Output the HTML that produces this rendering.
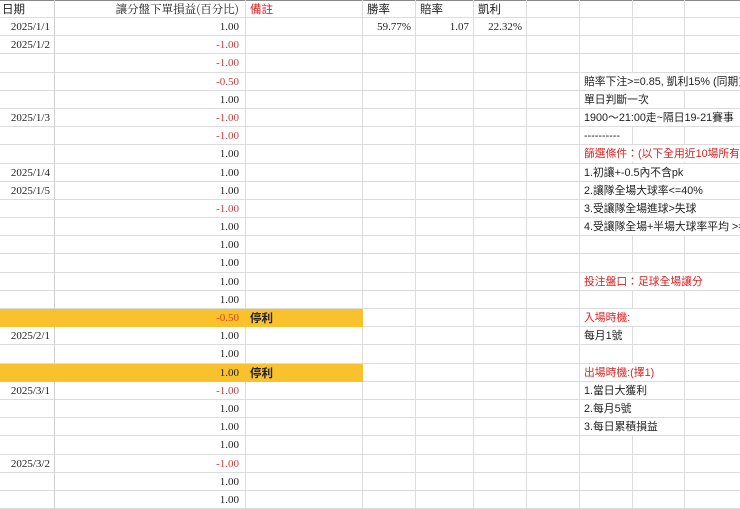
<!DOCTYPE html>
<html><head><meta charset="utf-8"><style>
*{margin:0;padding:0;box-sizing:border-box}
body{width:740px;height:499px;overflow:hidden;background:#fff;font-family:"Liberation Serif","Noto Serif CJK TC","Noto Serif CJK SC",serif;font-size:11px;color:#222;position:relative}
.top{position:absolute;left:0;top:0;width:740px;height:1px;background:#888}
.r{position:absolute;left:0;width:740px;height:18.19px;display:flex}
.r div{height:100%;border-right:1px solid #dcdcdc;border-bottom:1px solid #dcdcdc;line-height:18px;white-space:nowrap;overflow:visible;padding:0 4px}
.a{width:55px;text-align:right;border-right-color:#cfcfcf!important}
.b{width:191px;text-align:right;padding-right:6px!important}
.c{width:117px}
.d{width:53px;text-align:right}.e{width:58px;text-align:right}.f{width:53px;text-align:right}
.g{width:53px}.h{width:53px}.i{width:52px}.j{width:55px;border-right:none!important}
.n{color:#d03a3a}
.y .a,.y .b,.y .c{background:#f9c12c;border-color:#f9c12c!important}
.y .b.n{color:#e0401a}
.y .c{font-family:"Noto Sans CJK TC",sans-serif;font-weight:bold;font-size:11.5px}
.hd div{text-align:left;font-family:"Noto Sans CJK TC",sans-serif;font-size:11.5px}
.hd .b{text-align:right;font-family:"Noto Serif CJK TC",serif}
.red{color:#e02020}
.t{position:absolute;left:581px;height:17px;background:#fff;line-height:18px;padding:0 3px;white-space:nowrap;font-family:"Liberation Sans","Noto Sans CJK TC",sans-serif;font-size:10.8px;color:#222;max-width:159px;overflow:hidden}
.t.red{color:#e02020}
</style></head><body>
<div class="top"></div>
<div class="r hd" style="top:0;height:18px"><div class="a" style="text-align:left;padding-left:2px">日期</div><div class="b">讓分盤下單損益(百分比)</div><div class="c red">備註</div><div class="d" style="text-align:left">勝率</div><div class="e" style="text-align:left">賠率</div><div class="f" style="text-align:left">凱利</div><div class="g"></div><div class="h"></div><div class="i"></div><div class="j"></div></div>
<div class="r" style="top:18px"><div class="a">2025/1/1</div><div class="b">1.00</div><div class="c"></div><div class="d">59.77%</div><div class="e">1.07</div><div class="f">22.32%</div><div class="g"></div><div class="h"></div><div class="i"></div><div class="j"></div></div>
<div class="r" style="top:36.19px"><div class="a">2025/1/2</div><div class="b n">-1.00</div><div class="c"></div><div class="d"></div><div class="e"></div><div class="f"></div><div class="g"></div><div class="h"></div><div class="i"></div><div class="j"></div></div>
<div class="r" style="top:54.38px"><div class="a"></div><div class="b n">-1.00</div><div class="c"></div><div class="d"></div><div class="e"></div><div class="f"></div><div class="g"></div><div class="h"></div><div class="i"></div><div class="j"></div></div>
<div class="r" style="top:72.57px"><div class="a"></div><div class="b n">-0.50</div><div class="c"></div><div class="d"></div><div class="e"></div><div class="f"></div><div class="g"></div><div class="h"></div><div class="i"></div><div class="j"></div></div>
<div class="r" style="top:90.76px"><div class="a"></div><div class="b">1.00</div><div class="c"></div><div class="d"></div><div class="e"></div><div class="f"></div><div class="g"></div><div class="h"></div><div class="i"></div><div class="j"></div></div>
<div class="r" style="top:108.95px"><div class="a">2025/1/3</div><div class="b n">-1.00</div><div class="c"></div><div class="d"></div><div class="e"></div><div class="f"></div><div class="g"></div><div class="h"></div><div class="i"></div><div class="j"></div></div>
<div class="r" style="top:127.14px"><div class="a"></div><div class="b n">-1.00</div><div class="c"></div><div class="d"></div><div class="e"></div><div class="f"></div><div class="g"></div><div class="h"></div><div class="i"></div><div class="j"></div></div>
<div class="r" style="top:145.33px"><div class="a"></div><div class="b">1.00</div><div class="c"></div><div class="d"></div><div class="e"></div><div class="f"></div><div class="g"></div><div class="h"></div><div class="i"></div><div class="j"></div></div>
<div class="r" style="top:163.52px"><div class="a">2025/1/4</div><div class="b">1.00</div><div class="c"></div><div class="d"></div><div class="e"></div><div class="f"></div><div class="g"></div><div class="h"></div><div class="i"></div><div class="j"></div></div>
<div class="r" style="top:181.71px"><div class="a">2025/1/5</div><div class="b">1.00</div><div class="c"></div><div class="d"></div><div class="e"></div><div class="f"></div><div class="g"></div><div class="h"></div><div class="i"></div><div class="j"></div></div>
<div class="r" style="top:199.9px"><div class="a"></div><div class="b n">-1.00</div><div class="c"></div><div class="d"></div><div class="e"></div><div class="f"></div><div class="g"></div><div class="h"></div><div class="i"></div><div class="j"></div></div>
<div class="r" style="top:218.09px"><div class="a"></div><div class="b">1.00</div><div class="c"></div><div class="d"></div><div class="e"></div><div class="f"></div><div class="g"></div><div class="h"></div><div class="i"></div><div class="j"></div></div>
<div class="r" style="top:236.28px"><div class="a"></div><div class="b">1.00</div><div class="c"></div><div class="d"></div><div class="e"></div><div class="f"></div><div class="g"></div><div class="h"></div><div class="i"></div><div class="j"></div></div>
<div class="r" style="top:254.47px"><div class="a"></div><div class="b">1.00</div><div class="c"></div><div class="d"></div><div class="e"></div><div class="f"></div><div class="g"></div><div class="h"></div><div class="i"></div><div class="j"></div></div>
<div class="r" style="top:272.66px"><div class="a"></div><div class="b">1.00</div><div class="c"></div><div class="d"></div><div class="e"></div><div class="f"></div><div class="g"></div><div class="h"></div><div class="i"></div><div class="j"></div></div>
<div class="r" style="top:290.85px"><div class="a"></div><div class="b">1.00</div><div class="c"></div><div class="d"></div><div class="e"></div><div class="f"></div><div class="g"></div><div class="h"></div><div class="i"></div><div class="j"></div></div>
<div class="r y" style="top:309.04px"><div class="a"></div><div class="b n">-0.50</div><div class="c">停利</div><div class="d"></div><div class="e"></div><div class="f"></div><div class="g"></div><div class="h"></div><div class="i"></div><div class="j"></div></div>
<div class="r" style="top:327.23px"><div class="a">2025/2/1</div><div class="b">1.00</div><div class="c"></div><div class="d"></div><div class="e"></div><div class="f"></div><div class="g"></div><div class="h"></div><div class="i"></div><div class="j"></div></div>
<div class="r" style="top:345.42px"><div class="a"></div><div class="b">1.00</div><div class="c"></div><div class="d"></div><div class="e"></div><div class="f"></div><div class="g"></div><div class="h"></div><div class="i"></div><div class="j"></div></div>
<div class="r y" style="top:363.61px"><div class="a"></div><div class="b">1.00</div><div class="c">停利</div><div class="d"></div><div class="e"></div><div class="f"></div><div class="g"></div><div class="h"></div><div class="i"></div><div class="j"></div></div>
<div class="r" style="top:381.8px"><div class="a">2025/3/1</div><div class="b n">-1.00</div><div class="c"></div><div class="d"></div><div class="e"></div><div class="f"></div><div class="g"></div><div class="h"></div><div class="i"></div><div class="j"></div></div>
<div class="r" style="top:399.99px"><div class="a"></div><div class="b">1.00</div><div class="c"></div><div class="d"></div><div class="e"></div><div class="f"></div><div class="g"></div><div class="h"></div><div class="i"></div><div class="j"></div></div>
<div class="r" style="top:418.18px"><div class="a"></div><div class="b">1.00</div><div class="c"></div><div class="d"></div><div class="e"></div><div class="f"></div><div class="g"></div><div class="h"></div><div class="i"></div><div class="j"></div></div>
<div class="r" style="top:436.37px"><div class="a"></div><div class="b">1.00</div><div class="c"></div><div class="d"></div><div class="e"></div><div class="f"></div><div class="g"></div><div class="h"></div><div class="i"></div><div class="j"></div></div>
<div class="r" style="top:454.56px"><div class="a">2025/3/2</div><div class="b n">-1.00</div><div class="c"></div><div class="d"></div><div class="e"></div><div class="f"></div><div class="g"></div><div class="h"></div><div class="i"></div><div class="j"></div></div>
<div class="r" style="top:472.75px"><div class="a"></div><div class="b">1.00</div><div class="c"></div><div class="d"></div><div class="e"></div><div class="f"></div><div class="g"></div><div class="h"></div><div class="i"></div><div class="j"></div></div>
<div class="r" style="top:490.94px"><div class="a"></div><div class="b">1.00</div><div class="c"></div><div class="d"></div><div class="e"></div><div class="f"></div><div class="g"></div><div class="h"></div><div class="i"></div><div class="j"></div></div>

<div class="t" style="top:72.57px">賠率下注&gt;=0.85, 凱利15% (同期貨)</div>
<div class="t" style="top:90.76px">單日判斷一次</div>
<div class="t" style="top:108.95px">1900～21:00走~隔日19-21賽事</div>
<div class="t" style="top:127.14px">----------</div>
<div class="t red" style="top:145.33px">篩選條件：(以下全用近10場所有</div>
<div class="t" style="top:163.52px">1.初讓+-0.5內不含pk</div>
<div class="t" style="top:181.71px">2.讓隊全場大球率&lt;=40%</div>
<div class="t" style="top:199.9px">3.受讓隊全場進球&gt;失球</div>
<div class="t" style="top:218.09px">4.受讓隊全場+半場大球率平均 &gt;=5</div>
<div class="t red" style="top:272.66px">投注盤口：足球全場讓分</div>
<div class="t red" style="top:309.04px">入場時機:</div>
<div class="t" style="top:327.23px">每月1號</div>
<div class="t red" style="top:363.61px">出場時機:(擇1)</div>
<div class="t" style="top:381.8px">1.當日大獲利</div>
<div class="t" style="top:399.99px">2.每月5號</div>
<div class="t" style="top:418.18px">3.每日累積損益</div>
</body></html>
